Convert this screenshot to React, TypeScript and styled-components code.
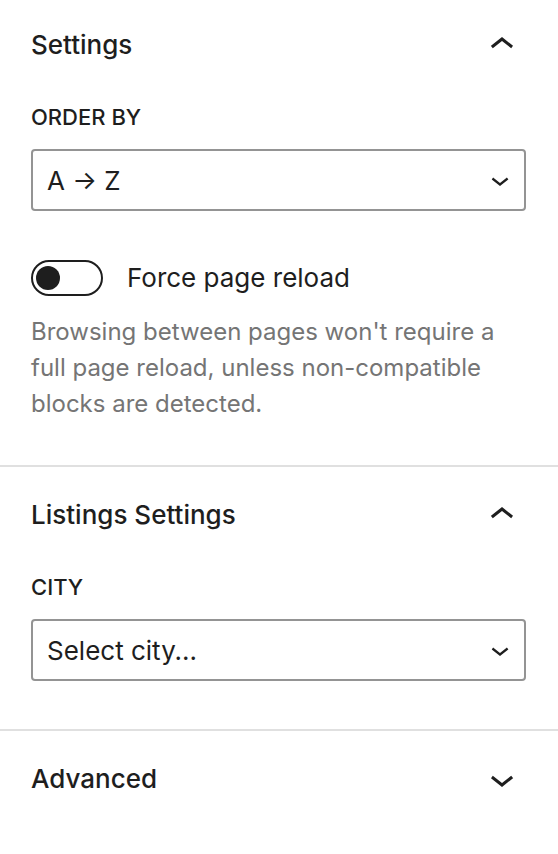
import React from "react"
import styled, { createGlobalStyle } from "styled-components"

const GlobalStyle = createGlobalStyle`
  html, body {
    margin: 0;
    padding: 0;
    background: #fff;
  }
  body {
    font-family: Inter, "Noto Sans", "Liberation Sans", sans-serif;
    color: #1e1e1e;
    -webkit-font-smoothing: antialiased;
  }
`

const ChevronUp = () => (
  <svg viewBox="0 0 24 24" width="48" height="48" aria-hidden="true">
    <path d="M6.5 12.4L12 8l5.5 4.4-.9 1.2L12 10l-4.6 3.6-1-1.2z" fill="#1e1e1e" />
  </svg>
)

const ChevronDown = ({ size = 48 }: { size?: number }) => (
  <svg viewBox="0 0 24 24" width={size} height={size} aria-hidden="true">
    <path d="M17.5 11.6L12 16l-5.5-4.4.9-1.2L12 14l4.6-3.6 1 1.2z" fill="#1e1e1e" />
  </svg>
)

interface PanelProps {
  title: string
  open?: boolean
  children?: React.ReactNode
}

const Panel = (props: PanelProps) => {
  return (
    <PanelWrap>
      <PanelHeader>
        <PanelTitle>{props.title}</PanelTitle>
        <IconSlot>{props.open ? <ChevronUp /> : <ChevronDown />}</IconSlot>
      </PanelHeader>
      {props.open && <PanelBody>{props.children}</PanelBody>}
    </PanelWrap>
  )
}

interface SelectProps {
  label: string
  value: string
}

const SelectField = (props: SelectProps) => (
  <Field>
    <Label>{props.label}</Label>
    <SelectBox>
      <SelectValue>{props.value}</SelectValue>
      <SelectIcon>
        <ChevronDown size={36} />
      </SelectIcon>
    </SelectBox>
  </Field>
)

const App = () => {
  return (
    <Sidebar>
      <GlobalStyle />
      <Panel title="Settings" open>
        <SelectField label="Order by" value="A → Z" />
        <ToggleRow>
          <Toggle>
            <Thumb />
          </Toggle>
          <ToggleLabel>Force page reload</ToggleLabel>
        </ToggleRow>
        <Help>
          Browsing between pages won't require a full page reload, unless
          non-compatible blocks are detected.
        </Help>
      </Panel>
      <Panel title="Listings Settings" open>
        <SelectField label="City" value="Select city..." />
      </Panel>
      <Panel title="Advanced" />
    </Sidebar>
  )
}

export default App

const Sidebar = styled.div`
  width: 558px;
  margin-top: -3px;
  display: flex;
  flex-direction: column;
`

const PanelWrap = styled.section`
  border-bottom: 2px solid #e0e0e0;
  &:last-child {
    border-bottom: none;
  }
`

const PanelHeader = styled.div`
  height: 96px;
  padding: 0 32px 0 31px;
  display: flex;
  align-items: center;
  justify-content: space-between;
`

const PanelTitle = styled.h2`
  margin: 0;
  font-size: 26px;
  line-height: 32px;
  font-weight: 500;
  color: #1e1e1e;
`

const IconSlot = styled.span`
  display: flex;
  width: 48px;
  height: 48px;
`

const PanelBody = styled.div`
  padding: 0 32px 32px 31px;
`

const Field = styled.div`
  margin-bottom: 16px;
`

const Label = styled.div`
  padding-top: 8px;
  margin-bottom: 16px;
  font-size: 22px;
  line-height: 32px;
  font-weight: 500;
  text-transform: uppercase;
  color: #1e1e1e;
`

const SelectBox = styled.div`
  box-sizing: border-box;
  height: 62px;
  border: 2px solid #949494;
  border-radius: 4px;
  display: flex;
  align-items: center;
  justify-content: space-between;
  padding: 0 6px 0 14px;
`

const SelectValue = styled.span`
  font-size: 26px;
  color: #1e1e1e;
`

const SelectIcon = styled.span`
  display: flex;
  width: 36px;
  height: 36px;
`

const ToggleRow = styled.div`
  margin-top: 49px;
  display: flex;
  align-items: center;
  gap: 24px;
  height: 36px;
`

const Toggle = styled.span`
  box-sizing: border-box;
  width: 72px;
  height: 36px;
  border: 2px solid #1e1e1e;
  border-radius: 18px;
  display: flex;
  align-items: center;
  padding-left: 3px;
`

const Thumb = styled.span`
  width: 24px;
  height: 24px;
  border-radius: 50%;
  background: #1e1e1e;
`

const ToggleLabel = styled.span`
  font-size: 26px;
  line-height: 36px;
  color: #1e1e1e;
`

const Help = styled.p`
  margin: 18px 0 11px;
  font-size: 24px;
  line-height: 36px;
  color: #757575;
`
